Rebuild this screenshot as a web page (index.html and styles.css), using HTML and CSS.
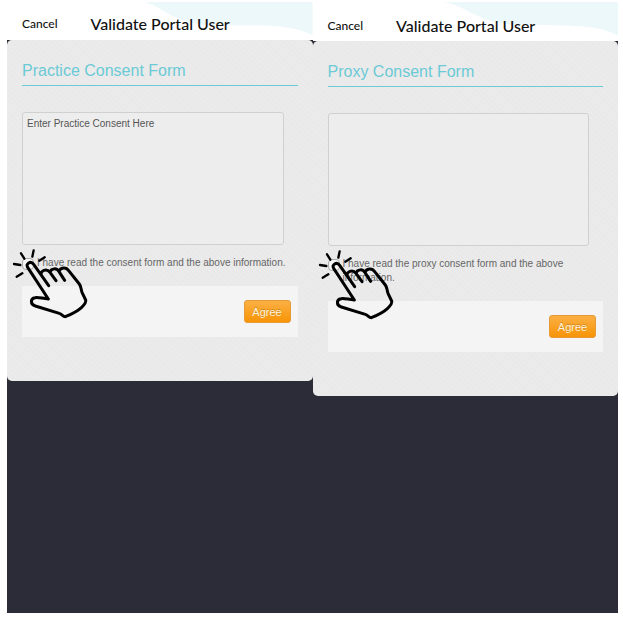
FILE: index.html
```
<!DOCTYPE html>
<html lang="en">
<head>
  <meta charset="UTF-8">
  <meta name="viewport" content="width=device-width, initial-scale=1.0">
  <title>Validate Portal User</title>
  <link rel="stylesheet" href="styles.css">
</head>
<body>
  <!-- Shared pointing hand -->
  <svg class="symbols" aria-hidden="true">
    <symbol id="hand" viewBox="36 54 228 216">
      <g fill="none" stroke="#000" stroke-linecap="round" stroke-linejoin="round">
        <path stroke-width="9" d="M145 207L83 112C76 101 92 91 101 103L146 167M124 134C120 122 140 114 150 127L168 152M150 127C153 114 171 113 177 125L194 151M177 125C181 111 199 111 206 122L238 162C244 170 242 176 246 187L257 210C260 218 252 224 245 232C230 246 211 254 196 260C188 260 186 252 178 250L106 228C90 224 91 205 105 203C115 201 125 205 145 207"/>
        <path stroke-width="7" d="M63 70L73 86M101 61L97 80M134 82L118 92M42 102L61 105M50 140L67 130"/>
      </g>
    </symbol>
  </svg>

  <main class="screens">
    <section class="screen">
      <header class="topbar">
        <svg class="wave" viewBox="0 0 306 38" preserveAspectRatio="none" aria-hidden="true">
          <path fill="#ecf8fa" d="M138 0C158 6 168 22 205 23C250 24 278 20 306 33V0Z"/>
        </svg>
        <button class="cancel" type="button">Cancel</button>
        <h1>Validate Portal User</h1>
      </header>
      <form class="consent">
        <h2>Practice Consent Form</h2>
        <textarea aria-label="Practice consent">Enter Practice Consent Here</textarea>
        <div class="agree-row">
          <input type="checkbox" id="practice-read">
          <label for="practice-read">I have read the consent form and the above information.</label>
          <svg class="hand" aria-hidden="true"><use href="#hand"/></svg>
        </div>
        <div class="actions">
          <button class="agree" type="button">Agree</button>
        </div>
      </form>
    </section>

    <section class="screen">
      <header class="topbar topbar-tall">
        <svg class="wave" viewBox="0 0 306 38" preserveAspectRatio="none" aria-hidden="true">
          <path fill="#ecf8fa" d="M132 0C158 6 168 22 205 22C250 24 280 20 306 33V0Z"/>
        </svg>
        <button class="cancel" type="button">Cancel</button>
        <h1>Validate Portal User</h1>
      </header>
      <form class="consent">
        <h2>Proxy Consent Form</h2>
        <textarea aria-label="Proxy consent"></textarea>
        <div class="agree-row">
          <input type="checkbox" id="proxy-read">
          <label for="proxy-read">I have read the proxy consent form and the above information.</label>
          <svg class="hand" aria-hidden="true"><use href="#hand"/></svg>
        </div>
        <div class="actions">
          <button class="agree" type="button">Agree</button>
        </div>
      </form>
    </section>
  </main>
</body>
</html>
```

FILE: styles.css
```
* {
  box-sizing: border-box;
}

body {
  margin: 0;
  padding: 2px 5px 4px 7px;
  background: #fff;
  font-family: "Liberation Sans", Arial, sans-serif;
}

.symbols {
  position: absolute;
  width: 0;
  height: 0;
}

.screens {
  display: grid;
  grid-template-columns: 1fr 1fr;
  min-height: calc(100vh - 6px);
}

.screen {
  background: #2c2b38;
}

/* White bar at the top */
.topbar {
  position: relative;
  display: flex;
  align-items: center;
  gap: 33px;
  height: 38px;
  padding: 4px 15px 0;
  background: #fff;
}

.topbar-tall {
  height: 39px;
  padding-top: 7px;
}

.wave {
  position: absolute;
  top: 0;
  left: 0;
  width: 100%;
  height: 100%;
}

.cancel,
.topbar h1 {
  position: relative;
  margin: 0;
  font-family: Lato, "Open Sans", sans-serif;
  font-weight: 500;
  color: #111;
}

.cancel {
  padding: 0;
  border: 0;
  background: none;
  font-size: 12px;
}

.topbar h1 {
  font-size: 16px;
}

/* Grey form card */
.consent {
  padding: 21px 15px 44px;
  border-radius: 5px;
  background: repeating-linear-gradient(45deg, #ebebeb 0 2px, #e9e9e9 2px 4px);
  color: #666;
}

.consent h2 {
  margin: 0 0 26px;
  padding-bottom: 4px;
  border-bottom: 1px solid #6bcad6;
  font-size: 16px;
  font-weight: normal;
  line-height: 20px;
  color: #6bcad6;
}

.consent textarea {
  display: block;
  width: 95%;
  height: 133px;
  padding: 5px 4px;
  border: 1px solid #d0d0d0;
  border-radius: 3px;
  background: #ededed;
  font-family: inherit;
  font-size: 10px;
  color: #555;
  resize: none;
}

.agree-row {
  position: relative;
  display: flex;
  align-items: flex-start;
  gap: 3px;
  padding: 11px 0 16px;
}

.agree-row input {
  flex: none;
  appearance: none;
  width: 12px;
  height: 12px;
  margin: 2px 0 0;
  border: 1px solid #aaa;
  border-radius: 4px;
  background: #f6f6f6;
}

.agree-row label {
  font-size: 10px;
  line-height: 14px;
}

.hand {
  position: absolute;
  top: 3px;
  left: -10px;
  width: 76px;
  height: 72px;
  pointer-events: none;
}

.actions {
  display: flex;
  justify-content: flex-end;
  padding: 14px 7px;
  background: #f4f4f4;
}

.agree {
  width: 47px;
  height: 23px;
  padding: 0;
  border: 1px solid #e59a35;
  border-radius: 3px;
  background: linear-gradient(#fbb044, #f89406);
  font-family: inherit;
  font-size: 11px;
  color: #fff4dc;
  text-shadow: 0 -1px 0 rgba(0, 0, 0, 0.2);
}
```
